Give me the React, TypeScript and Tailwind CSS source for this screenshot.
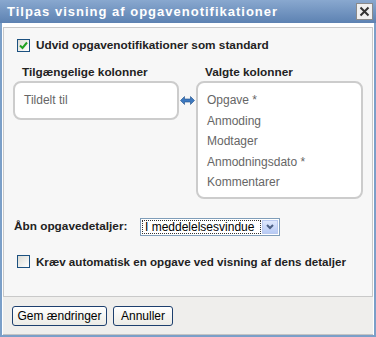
import React from "react";

function Check({ checked }: { checked?: boolean }) {
  return (
    <div className="w-[13px] h-[13px] border border-[#1c5180] bg-gradient-to-br from-[#dcdcd5] to-[#ffffff] flex items-center justify-center shrink-0">
      {checked && (
        <svg width="9" height="9" viewBox="0 0 9 9">
          <path d="M1 4.5 L3.5 7 L8 1.5" stroke="#21a121" strokeWidth="2" fill="none" />
        </svg>
      )}
    </div>
  );
}

export default function App() {
  const font = { fontFamily: '"Liberation Sans", Arial, sans-serif' };
  return (
    <div className="w-[376px] h-[337px] bg-[#7b9fc8] flex flex-col overflow-hidden" style={font}>
      <div className="h-[23px] bg-gradient-to-b from-[#89a8cf] to-[#5d82b2] flex items-center justify-between pl-[7px] pr-[3px] shrink-0">
        <span className="text-white font-bold text-[13px] tracking-[1px]">Tilpas visning af opgavenotifikationer</span>
        <div className="w-[17px] h-[17px] bg-[#f0f0f0] border border-[#8a8a8a] flex items-center justify-center">
          <svg width="11" height="11" viewBox="0 0 11 11">
            <path d="M1.5 1.5 L9.5 9.5 M9.5 1.5 L1.5 9.5" stroke="#333" strokeWidth="2" />
          </svg>
        </div>
      </div>
      <div className="flex-1 mx-[2px] mb-[2px] bg-white flex flex-col pt-[4px] px-[1px]">
        <div className="flex-1 border border-[#c9c9c9] bg-[#f7f7f7] flex flex-col px-[13px] pt-[11px] relative">
          <div className="flex items-center gap-[6px] h-[13px]">
            <Check checked />
            <span className="font-bold text-[11.8px] text-[#222]">Udvid opgavenotifikationer som standard</span>
          </div>
          <div className="flex mt-[12px] -ml-[4px]">
            <div className="flex flex-col w-[166px] shrink-0">
              <span className="font-bold text-[11.8px] text-[#222] ml-[9px] h-[16px] leading-[16px]">Tilgængelige kolonner</span>
              <div className="mt-[1px] h-[39px] rounded-[8px] border-2 border-[#cccccc] bg-white px-[9px] pt-[10px] text-[12px] text-[#666] leading-[14px]">
                Tildelt til
              </div>
            </div>
            <div className="w-[17px] shrink-0 flex justify-center self-start mt-[32px]">
              <svg width="15" height="9" viewBox="0 0 15 9">
                <path d="M0.5 4.5 L4.5 0.5 L4.5 3 L10.5 3 L10.5 0.5 L14.5 4.5 L10.5 8.5 L10.5 6 L4.5 6 L4.5 8.5 Z" fill="#3d79c0" stroke="#1f4f8a" strokeWidth="0.6" />
              </svg>
            </div>
            <div className="flex flex-col w-[167px] shrink-0">
              <span className="font-bold text-[11.8px] text-[#222] ml-[9px] h-[16px] leading-[16px]">Valgte kolonner</span>
              <div className="mt-[1px] h-[118px] rounded-[8px] border-2 border-[#cccccc] bg-white px-[9px] pt-[10px] text-[12px] text-[#666] flex flex-col gap-[6.6px] leading-[14px]">
                <span>Opgave *</span>
                <span>Anmoding</span>
                <span>Modtager</span>
                <span>Anmodningsdato *</span>
                <span>Kommentarer</span>
              </div>
            </div>
          </div>
          <div className="flex items-center mt-[19px] -ml-[3px]">
            <span className="font-bold text-[11.8px] text-[#222] w-[126px] shrink-0">Åbn opgavedetaljer:</span>
            <div className="w-[140px] h-[18px] shrink-0 border border-[#7f9db9] bg-white flex items-center p-[1px]">
              <div className="flex-1 min-w-0 h-full bg-white border border-dotted border-[#333] text-[12px] text-black flex items-center pl-[2px] leading-none whitespace-nowrap overflow-hidden">
                I meddelelsesvindue
              </div>
              <div className="w-[16px] h-full shrink-0 bg-gradient-to-b from-[#dfe8fc] to-[#b8cbf5] border border-[#b9c9ef] flex items-center justify-center ml-[1px]">
                <svg width="8" height="6" viewBox="0 0 8 6">
                  <path d="M1 1 L4 4 L7 1" stroke="#4d6185" strokeWidth="2" fill="none" />
                </svg>
              </div>
            </div>
          </div>
          <div className="flex items-center gap-[6px] mt-[19px] h-[13px]">
            <Check />
            <span className="font-bold text-[11.6px] text-[#222]">Kræv automatisk en opgave ved visning af dens detaljer</span>
          </div>
        </div>
        <div className="h-[38px] bg-[#efeeec] border-b border-[#c4c4c4] flex items-center gap-[6px] pl-[9px] pt-[1px] shrink-0">
          <button className="h-[20px] w-[95px] rounded-[3px] border border-[#1d3f6e] bg-gradient-to-b from-[#ffffff] to-[#ecebe6] text-[12px] text-black leading-none">Gem ændringer</button>
          <button className="h-[20px] w-[60px] rounded-[3px] border border-[#1d3f6e] bg-gradient-to-b from-[#ffffff] to-[#ecebe6] text-[12px] text-black leading-none">Annuller</button>
        </div>
      </div>
    </div>
  );
}
